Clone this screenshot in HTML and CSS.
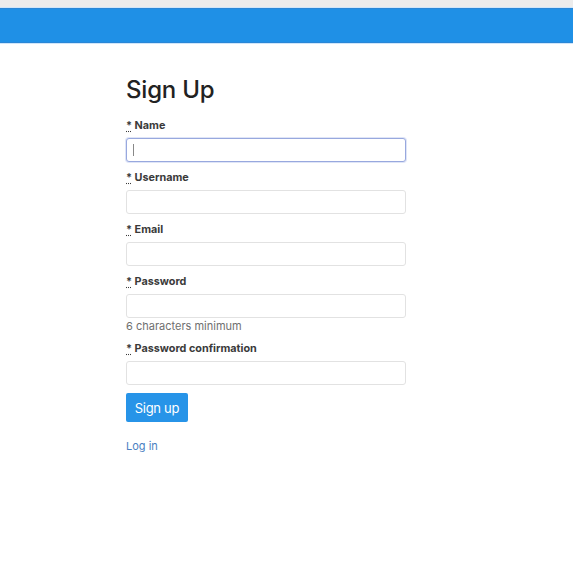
FILE: index.html
```html
<!DOCTYPE html>
<html>
<head>
<meta charset="utf-8">
<link rel="stylesheet" href="styles.css">
</head>
<body>
<div class="topstrip"></div>
<header class="navbar"></header>
<main class="container">
  <h1 class="title">Sign Up</h1>
  <form class="form">
    <div class="field">
      <label class="label"><abbr class="req" title="required">*</abbr> Name</label>
      <div class="input focused"><span class="caret"></span></div>
    </div>
    <div class="field">
      <label class="label"><abbr class="req" title="required">*</abbr> Username</label>
      <div class="input"></div>
    </div>
    <div class="field">
      <label class="label"><abbr class="req" title="required">*</abbr> Email</label>
      <div class="input"></div>
    </div>
    <div class="field">
      <label class="label"><abbr class="req" title="required">*</abbr> Password</label>
      <div class="input"></div>
      <p class="hint">6 characters minimum</p>
    </div>
    <div class="field">
      <label class="label"><abbr class="req" title="required">*</abbr> Password confirmation</label>
      <div class="input"></div>
    </div>
    <button type="button" class="btn">Sign up</button>
  </form>
  <a class="link" href="#">Log in</a>
</main>
</body>
</html>
```
FILE: styles.css
```css
html, body {
  margin: 0;
  padding: 0;
  background: #ffffff;
}
body {
  font-family: Inter, "Liberation Sans", sans-serif;
  color: #333333;
}
.topstrip {
  height: 7px;
  background: #ececec;
  border-bottom: 1px solid #cfe6fa;
}
.navbar {
  height: 33px;
  background: #1f90e6;
  border-top: 1px solid #2a86d6;
  border-bottom: 1px solid #2a86d6;
  box-shadow: 0 1px 0 #cfe6fa;
}
.container {
  width: 280px;
  margin-left: 126px;
  padding-top: 31px;
}
.title {
  margin: 0 0 13px 0;
  font-size: 24px;
  font-weight: 500;
  line-height: 32px;
  color: #222222;
  letter-spacing: -0.2px;
}
.form {
  display: flex;
  flex-direction: column;
}
.field {
  display: flex;
  flex-direction: column;
  margin-bottom: 9px;
}
.label {
  font-size: 10.8px;
  font-weight: 700;
  line-height: 14px;
  color: #3a3a3a;
  margin-bottom: 5px;
}
.req {
  text-decoration: underline dotted;
  text-underline-offset: 2px;
  border: none;
  cursor: help;
}
.input {
  height: 22px;
  border: 1px solid #e2e2e2;
  border-radius: 3px;
  background: #fff;
  display: flex;
  align-items: center;
  padding-left: 6px;
}
.input.focused {
  border: 1px solid #98a8de;
  box-shadow: 0 0 0 1px #dfe5f7;
}
.caret {
  width: 1px;
  height: 12px;
  background: #888;
}
.hint {
  margin: 1px 0 0 0;
  font-size: 11px;
  line-height: 14px;
  color: #6f6f6f;
}
.btn {
  align-self: flex-start;
  margin-top: -1px;
  width: 62px;
  height: 29px;
  border: none;
  border-radius: 2px;
  background: #2794e8;
  color: #ffffff;
  font-family: Inter, "Liberation Sans", sans-serif;
  font-size: 13px;
  letter-spacing: -0.3px;
  padding: 0;
}
.link {
  display: inline-block;
  margin-top: 17px;
  font-size: 11px;
  color: #4a7fc2;
  text-decoration: none;
}
```
